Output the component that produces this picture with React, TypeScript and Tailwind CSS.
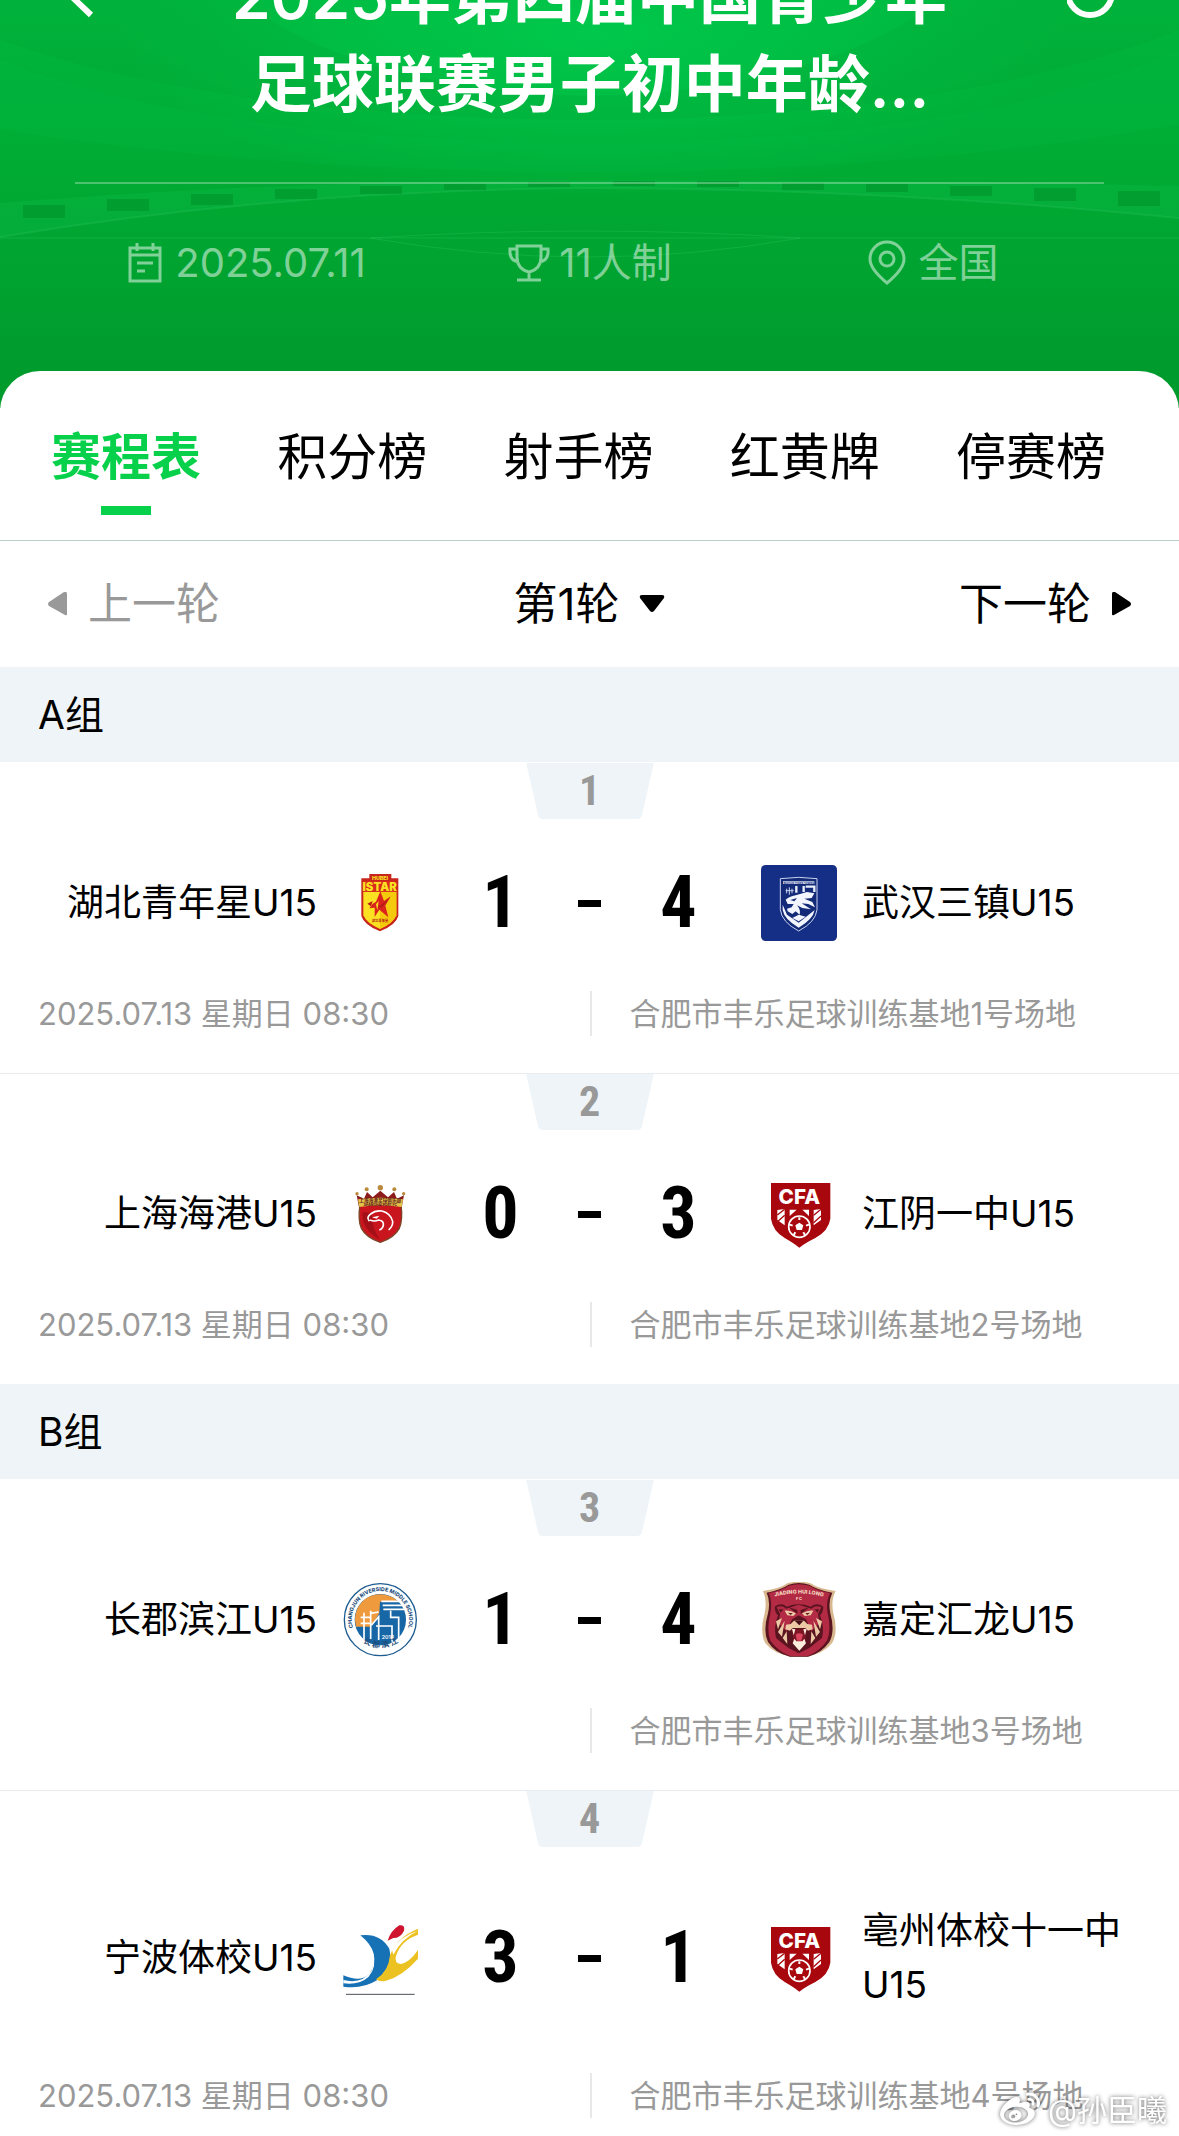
import type { ReactNode } from "react";
import { FaWeibo } from "react-icons/fa";

const tabs = ["赛程表", "积分榜", "射手榜", "红黄牌", "停赛榜"];

const IstarLogo = () => (
  <svg viewBox="6 42 228 228" className="size-full">
    <path d="M88 69H154V82H175V195Q168 222 120 241Q72 222 64 195V82H88Z" fill="#c8261c" />
    <path d="M70 122H169V193Q160 216 120 234Q79 216 70 193Z" fill="#fbe122" />
    <path d="M120 122H169V193Q160 216 120 234Z" fill="#f5c90c" />
    <path d="M70 90H169V122H70Z" fill="#d92a1c" />
    <text x="120" y="86" textAnchor="middle" fontSize="16" fontWeight="800" fill="#fbe122">
      HUBEI
    </text>
    <text x="119" y="120" textAnchor="middle" fontSize="34" fontWeight="900" fill="#fbe122">
      ISTAR
    </text>
    <path d="M121 121L132 150L152 136L136 164L145 199L118 176L104 198L104 170L88 172L98 158L108 152Z" fill="#d9231c" />
    <path d="M82 158L98 150L93 166ZM112 171L150 140L126 168Z" fill="#b51a17" />
    <path d="M108 160L116 150L112 178Z" fill="#fbe122" />
    <text x="120" y="213" textAnchor="middle" fontSize="10" fontWeight="700" fill="#b51a17">
      湖北青年星
    </text>
  </svg>
);

const WuhanLogo = () => (
  <svg viewBox="62 41 228 228" className="size-full">
    <rect x="62" y="41" width="228" height="228" rx="14" fill="#152f86" />
    <path d="M120 82Q175 74 230 82V175Q226 212 175 239Q124 212 120 175Z" fill="#132a78" stroke="#c9d3ee" strokeWidth="3" />
    <path d="M128 90H222V98H128Z" fill="#e9eefb" />
    <text x="175" y="98" textAnchor="middle" fontSize="8" fontWeight="700" fill="#132a78">
      WUHAN THREE TOWNS
    </text>
    <path d="M168 104V124M190 104V122M196 106H222V122" stroke="#e9eefb" strokeWidth="7" fill="none" />
    <path d="M139 112V126M147 108V130M155 112V126M136 118H160" stroke="#c9d3ee" strokeWidth="3" />
    <path
      d="M136 145Q146 136 166 132L200 122L222 126L214 140L192 142L216 152L224 168L204 158L184 156L212 174L186 170L170 162Q182 176 178 190L166 180L156 188L142 180L140 172L154 168L160 158L142 158Z"
      fill="#f2f5fd"
    />
    <path d="M150 146L170 140L162 150Z" fill="#132a78" />
    <path d="M127 160V176Q132 204 175 229Q218 204 223 176L175 214L140 190Z" fill="#f2f5fd" />
    <path d="M156 200L175 190L196 196L175 210Z" fill="#f2f5fd" />
  </svg>
);

const PortLogo = () => (
  <svg viewBox="36 18 228 228" className="size-full">
    <circle cx="81" cy="71" r="5" fill="#b9893c" />
    <circle cx="110" cy="58" r="6" fill="#b9893c" />
    <circle cx="151" cy="53" r="8" fill="#b9893c" />
    <circle cx="193" cy="58" r="6" fill="#b9893c" />
    <circle cx="221" cy="71" r="5" fill="#b9893c" />
    <path d="M80 76L102 86L111 66L128 82L151 62L174 82L192 66L201 86L222 76L214 118H88Z" fill="#8c1c1c" />
    <path d="M90 104H213Q219 150 208 175Q193 203 151 217Q109 203 94 175Q83 150 90 104Z" fill="#c9151e" stroke="#7a4526" strokeWidth="4" />
    <path d="M98 126Q92 176 151 210Q124 176 126 130Z" fill="#a31018" />
    <path d="M84 88Q151 78 219 88L215 111Q151 101 88 111Z" fill="#e3c34a" />
    <text x="151" y="97" textAnchor="middle" fontSize="14" fontWeight="700" fill="#5f1716">
      上海海港足球俱乐部
    </text>
    <text x="151" y="107" textAnchor="middle" fontSize="10" fontWeight="800" fill="#5f1716">
      SHANGHAI PORT FC
    </text>
    <path
      d="M118 154Q108 142 122 132Q136 120 156 123Q182 130 188 154Q189 168 176 180M120 150Q132 156 146 150Q162 152 160 166Q158 176 148 180"
      fill="none"
      stroke="#fff"
      strokeWidth="5"
    />
    <path d="M126 142L148 137L140 146Z" fill="#fff" />
  </svg>
);

const CfaLogo = () => (
  <svg viewBox="63 48 228 228" className="size-full">
    <path d="M93 69H271V176Q266 212 226 234Q194 250 178 263Q162 250 134 234Q98 212 93 176Z" fill="#a8070d" />
    <text x="178" y="131" textAnchor="middle" fontSize="62" fontWeight="800" fill="#fff">
      CFA
    </text>
    <path d="M112 150L134 147V196L112 180ZM149 149H170L149 168ZM187 149H207V168ZM221 150L243 147V180L221 196Z" fill="#fff" />
    <path d="M112 165L134 148M114 184L134 166M221 166L243 148M221 188L243 168" stroke="#a8070d" strokeWidth="4" />
    <circle cx="178" cy="200" r="38" fill="#a8070d" />
    <circle cx="178" cy="200" r="32" fill="none" stroke="#fff" strokeWidth="5" />
    <path d="M178 188L190 196L186 210H170L166 196Z" fill="#fff" />
    <path d="M178 172V180M149 194L158 197M207 194L198 197M161 225L166 217M195 225L190 217" stroke="#fff" strokeWidth="6" />
  </svg>
);

const ChangjunLogo = () => (
  <svg viewBox="36 66 228 228" className="size-full">
    <defs>
      <path id="ring-top" d="M77 222A86 86 0 1 1 226 222" />
      <path id="ring-bottom" d="M64 208A98 98 0 0 0 240 208" />
    </defs>
    <circle cx="151" cy="179" r="108" fill="#fff" stroke="#1d5c91" strokeWidth="4" />
    <circle cx="151" cy="179" r="77" fill="#1766a5" />
    <path d="M75 179A76 76 0 0 1 205 125L150 125L148 160L122 200H78Z" fill="#f09a3e" />
    <path d="M92 172H120M92 190H120M102 158V244M122 152V238M122 160L146 156M124 196L146 170V240M138 198H186V248M154 124H214M158 136H218M160 148H222M182 152V172H206V236" fill="none" stroke="#fff" strokeWidth="5" />
    <text x="174" y="236" textAnchor="middle" fontSize="16" fontWeight="600" fill="#fff">
      2016
    </text>
    <text fontSize="16" fontWeight="800" fill="#1d4f80">
      <textPath href="#ring-top" startOffset="50%" textAnchor="middle">
        CHANGJUN RIVERSIDE MIDDLE SCHOOL
      </textPath>
    </text>
    <text fontSize="24" fontWeight="700" fill="#1d4f80">
      <textPath href="#ring-bottom" startOffset="50%" textAnchor="middle">
        长 郡 滨 江
      </textPath>
    </text>
  </svg>
);

const JiadingLogo = () => (
  <svg viewBox="63 66 228 228" className="size-full">
    <defs>
      <path id="jiading-arc" d="M100 111Q176 90 254 111" />
    </defs>
    <path d="M69 93Q120 86 142 70Q176 60 212 70Q234 86 287 93Q272 120 280 160Q296 216 276 250Q250 280 204 290H150Q100 280 76 250Q58 216 74 160Q82 120 69 93Z" fill="#d9b890" />
    <path d="M80 98Q122 90 146 74Q176 64 208 74Q232 90 277 98Q264 124 271 160Q286 214 268 246Q244 280 204 290H150Q106 280 84 246Q68 214 84 160Q92 124 80 98Z" fill="#5a1420" />
    <path d="M86 99Q124 92 146 77Q176 68 208 77Q232 92 270 99Q257 126 263 160Q275 210 261 242Q240 272 204 288H150Q112 272 91 242Q79 210 91 160Q98 126 86 99Z" fill="#b32a45" />
    <text fontSize="16" fontWeight="800" fill="#f4d9c0">
      <textPath href="#jiading-arc" startOffset="50%" textAnchor="middle">
        JIADING HUI LONG
      </textPath>
    </text>
    <text x="177" y="119" textAnchor="middle" fontSize="12" fontWeight="800" fill="#f4d9c0">
      F C
    </text>
    <path d="M104 140Q124 126 140 140Q176 126 212 140Q232 126 250 140Q250 156 240 166Q254 200 246 234Q226 250 208 264L176 280L146 264Q126 250 108 234Q100 200 114 166Q104 156 104 140Z" fill="#5a1420" />
    <path d="M110 142Q126 134 138 146L176 134L214 146Q228 134 244 142L234 162L238 190L214 214L198 178L176 166L156 178L140 214L116 190L120 162Z" fill="#b32a45" />
    <path d="M146 142L172 150V162ZM208 142L182 150V162ZM116 148L130 148L122 158ZM238 148L224 148L232 158Z" fill="#5a1420" />
    <path d="M134 152Q150 150 168 160L160 168L142 166ZM220 152Q204 150 186 160L194 168L212 166Z" fill="#ecc9a4" />
    <path d="M144 158L158 160L152 165ZM210 158L196 160L202 165Z" fill="#5a1420" />
    <path d="M108 184L126 174L114 208ZM246 184L228 174L240 208ZM114 216L134 182L126 230ZM240 216L220 182L228 230ZM128 234L140 214L142 252ZM226 234L214 214L212 252Z" fill="#ecc9a4" />
    <path d="M162 182H192L202 192L216 194L218 208L204 212L196 204H158L150 212L136 208L138 194L152 192Z" fill="#ecc9a4" />
    <path d="M164 182H190L178 196Z" fill="#431019" />
    <path d="M156 208H200L196 244L178 250L160 244Z" fill="#7d1525" />
    <path d="M156 206L166 208L161 226ZM200 206L190 208L195 226ZM158 250L163 236L169 244H187L193 236L198 250L178 272Z" fill="#fbeedd" />
    <path d="M167 224Q178 216 189 224L184 242H171Z" fill="#d8455c" />
  </svg>
);

const NingboLogo = () => (
  <svg viewBox="36 60 228 228" className="size-full">
    <path d="M91 106Q150 98 178 146Q190 196 142 240Q98 268 40 260V226Q92 248 118 222Q158 160 91 106Z" fill="#1671b5" />
    <path d="M40 240Q96 254 124 212Q132 190 128 166Q142 200 116 230Q88 256 40 250Z" fill="#fff" />
    <path d="M138 238Q176 214 180 166Q200 112 264 86V104Q212 122 198 168Q192 190 212 192Q238 188 264 150V176Q216 230 166 243Q148 246 138 238Z" fill="#ecc223" />
    <path d="M186 150Q208 110 264 92Q214 116 190 164Z" fill="#fff" />
    <path d="M173 122Q182 92 208 76Q226 74 222 92Q212 114 190 114Z" fill="#cf1430" />
    <path d="M48 283H254" stroke="#4b5056" strokeWidth="3" />
  </svg>
);

type Team = { name: string; logo: ReactNode };
type Match = {
  no: number;
  home: Team;
  away: Team;
  score: [number, number];
  date: string;
  venue: string;
};

const groups: { name: string; matches: Match[] }[] = [
  {
    name: "A组",
    matches: [
      {
        no: 1,
        home: { name: "湖北青年星U15", logo: <IstarLogo /> },
        away: { name: "武汉三镇U15", logo: <WuhanLogo /> },
        score: [1, 4],
        date: "2025.07.13 星期日 08:30",
        venue: "合肥市丰乐足球训练基地1号场地",
      },
      {
        no: 2,
        home: { name: "上海海港U15", logo: <PortLogo /> },
        away: { name: "江阴一中U15", logo: <CfaLogo /> },
        score: [0, 3],
        date: "2025.07.13 星期日 08:30",
        venue: "合肥市丰乐足球训练基地2号场地",
      },
    ],
  },
  {
    name: "B组",
    matches: [
      {
        no: 3,
        home: { name: "长郡滨江U15", logo: <ChangjunLogo /> },
        away: { name: "嘉定汇龙U15", logo: <JiadingLogo /> },
        score: [1, 4],
        date: "",
        venue: "合肥市丰乐足球训练基地3号场地",
      },
      {
        no: 4,
        home: { name: "宁波体校U15", logo: <NingboLogo /> },
        away: { name: "亳州体校十一中U15", logo: <CfaLogo /> },
        score: [3, 1],
        date: "2025.07.13 星期日 08:30",
        venue: "合肥市丰乐足球训练基地4号场地",
      },
    ],
  },
];

// dark boards along the edge of the pitch: x, y, height
const boards = [
  [23, 205, 13], [107, 199, 12], [191, 194, 11], [275, 189, 10], [360, 186, 8],
  [444, 184, 6], [528, 182, 5], [613, 181, 5], [697, 181, 6], [782, 183, 7],
  [866, 184, 8], [950, 186, 10], [1034, 188, 13], [1118, 191, 15],
];

const Stadium = () => (
  <svg
    viewBox="0 0 1179 408"
    preserveAspectRatio="none"
    className="absolute inset-0 size-full"
    aria-hidden="true"
  >
    <defs>
      <linearGradient id="field" x1="0" y1="0" x2="0" y2="1">
        <stop offset="0" stopColor="#00b63d" />
        <stop offset="0.45" stopColor="#00aa33" />
        <stop offset="0.9" stopColor="#009b2d" />
      </linearGradient>
      <radialGradient id="glow" cx="0.5" cy="0.08" r="0.4">
        <stop offset="0" stopColor="#00c84c" />
        <stop offset="1" stopColor="#00c84c" stopOpacity="0" />
      </radialGradient>
    </defs>
    <rect width="1179" height="408" fill="url(#field)" />
    <rect width="1179" height="408" fill="url(#glow)" />
    <path d="M0 60Q200 140 589 143Q980 140 1179 50V125Q900 172 589 172Q280 172 0 130Z" fill="#00c048" opacity="0.16" />
    <path d="M0 0H240Q360 90 589 96Q820 90 940 0H1179V30Q960 118 589 120Q220 118 0 40Z" fill="#009a30" opacity="0.16" />
    <path d="M0 203Q280 180 589 180Q900 180 1179 186V218Q880 188 589 188Q280 190 0 237Z" fill="#0cbb48" opacity="0.35" />
    <path d="M0 237Q280 190 589 188Q880 188 1179 218" fill="none" stroke="#2cc45c" strokeWidth="2" opacity="0.3" />
    <path d="M0 238H1179M370 238Q589 276 800 238Q589 224 370 238" fill="none" stroke="#2cc45c" strokeWidth="1" opacity="0.35" />
    {boards.map(([x, y, h]) => (
      <rect key={x} x={x} y={y} width="42" height={h} fill="#009329" opacity="0.6" />
    ))}
  </svg>
);

const Header = () => (
  <header className="relative overflow-hidden bg-[#009b2d] pb-[115px] text-white">
    <Stadium />
    <div className="relative -mt-[47px] flex items-start justify-between px-14">
      <button type="button" aria-label="返回" className="mt-4">
        <svg viewBox="0 0 56 56" className="size-14" fill="none" stroke="#fff" strokeWidth="6">
          <path d="M34 4L12 24L35 46" />
        </svg>
      </button>
      <h1 className="text-center text-[62px] leading-[88px] font-semibold">
        2025年第四届中国青少年
        <br />
        足球联赛男子初中年龄...
      </h1>
      <button type="button" aria-label="更多" className="mt-4">
        <svg viewBox="0 0 56 56" className="size-14" fill="none" stroke="#fff" strokeWidth="6">
          <circle cx="23" cy="24" r="22" />
        </svg>
      </button>
    </div>
    <div className="relative mx-[75px] mt-[53px] border-t-2 border-white/30"></div>
    <ul className="relative mx-[75px] mt-[49px] grid grid-cols-3 text-[40px] leading-[60px] text-white/50">
      <li className="flex items-center justify-center gap-3">
        <svg viewBox="0 0 36 42" className="h-[42px] w-9" fill="none" stroke="currentColor" strokeWidth="3">
          <path d="M3 6H33V39H3ZM3 13H33M10 1V9M26 1V9M10 21H26M10 29H18" />
        </svg>
        2025.07.11
      </li>
      <li className="flex items-center justify-center gap-2">
        <svg viewBox="0 0 44 40" className="h-10 w-11" fill="none" stroke="currentColor" strokeWidth="3">
          <path d="M10 3H34V14Q34 26 22 29Q10 26 10 14ZM10 6H3Q2 18 12 19M34 6H41Q42 18 32 19M22 29V36M10 37H34" />
        </svg>
        11人制
      </li>
      <li className="flex items-center justify-center gap-3">
        <svg viewBox="0 0 40 46" className="h-[46px] w-10" fill="none" stroke="currentColor" strokeWidth="3">
          <path d="M20 43Q3 29 3 19A17 17 0 0 1 37 19Q37 29 20 43Z" />
          <circle cx="20" cy="19" r="7" />
        </svg>
        全国
      </li>
    </ul>
  </header>
);

const TeamLogo = ({ children }: { children: ReactNode }) => (
  <div className="size-[76px] shrink-0">{children}</div>
);

const MatchCard = ({ match }: { match: Match }) => (
  <li className="border-t border-[#e8ecee] pb-[37px] first:border-transparent">
    <div className="relative mx-auto flex h-14 w-32 items-center justify-center">
      <svg viewBox="0 0 128 56" className="absolute inset-0 size-full" aria-hidden="true">
        <path d="M0 -1H128L116 52Q115 56 111 56H17Q13 56 12 52Z" fill="#eef4f7" />
      </svg>
      <span className="relative font-['Roboto_Condensed','Roboto',sans-serif] text-[42px] leading-[56px] font-bold text-[#999]">
        {match.no}
      </span>
    </div>
    <div className="mt-[46px] flex items-center">
      <p className="flex-1 py-[11px] pr-[25px] pl-9 text-right text-[37px] leading-[54px]">
        {match.home.name}
      </p>
      <TeamLogo>{match.home.logo}</TeamLogo>
      <div className="flex w-[343px] shrink-0 items-center justify-center font-['Roboto_Condensed','Roboto',sans-serif] text-[72px] leading-[76px] font-bold">
        <span className="w-[89px] text-center">{match.score[0]}</span>
        <span className="flex w-[89px] justify-center">
          <span className="h-[7px] w-[23px] bg-black"></span>
        </span>
        <span className="w-[89px] text-center">{match.score[1]}</span>
      </div>
      <TeamLogo>{match.away.logo}</TeamLogo>
      <p className="flex-1 py-[11px] pr-9 pl-[25px] text-[37px] leading-[54px]">
        {match.away.name}
      </p>
    </div>
    <div className="mt-[50px] grid grid-cols-2 text-[31px] leading-[45px] text-[#999]">
      <p className="pl-[38px]">{match.date}</p>
      <p className="border-l-2 border-[#e6e8ea] pl-[38px]">{match.venue}</p>
    </div>
  </li>
);

export default function App() {
  return (
    <div className="relative min-h-screen overflow-hidden bg-white font-['Inter','Noto_Sans_CJK_SC',sans-serif] text-black">
      <Header />
      <main className="relative -mt-[37px] rounded-t-[40px] bg-white">
        <nav className="flex justify-between border-b border-[#b9cdc9] pt-[52px] pr-[73px] pl-[51px] text-[50px] leading-[68px]">
          {tabs.map((tab, i) => (
            <a
              key={tab}
              href="#"
              className={
                i === 0
                  ? "flex flex-col items-center font-bold text-[#07d14a]"
                  : "flex flex-col items-center"
              }
            >
              {tab}
              <span
                className={
                  i === 0
                    ? "mt-[15px] mb-[25px] h-[9px] w-[50px] bg-[#07d14a]"
                    : "hidden"
                }
              ></span>
            </a>
          ))}
        </nav>
        <div className="flex items-center justify-between px-12 py-8 text-[44px] leading-[62px]">
          <button type="button" className="flex items-center gap-5 text-[#999]">
            <svg viewBox="0 0 20 26" className="h-[26px] w-5" fill="currentColor">
              <path d="M18 1Q19 1 19 3V23Q19 25 17 24L1 15Q-1 13 1 11L16 1Z" />
            </svg>
            上一轮
          </button>
          <button type="button" className="flex items-center gap-5">
            第1轮
            <svg viewBox="0 0 26 18" className="h-[18px] w-[26px]" fill="currentColor">
              <path d="M3 0H23Q26 0 25 3L15 16Q13 18 11 16L1 3Q0 0 3 0Z" />
            </svg>
          </button>
          <button type="button" className="flex items-center gap-5">
            下一轮
            <svg viewBox="0 0 20 26" className="h-[26px] w-5" fill="currentColor">
              <path d="M2 1Q1 1 1 3V23Q1 25 3 24L19 15Q21 13 19 11L4 1Z" />
            </svg>
          </button>
        </div>
        {groups.map((group) => (
          <section key={group.name}>
            <h2 className="bg-[#eef4f7] px-[38px] py-[17px] text-[39px] leading-[61px]">
              {group.name}
            </h2>
            <ul>
              {group.matches.map((match) => (
                <MatchCard key={match.no} match={match} />
              ))}
            </ul>
          </section>
        ))}
      </main>
      <div className="fixed right-3 bottom-1 flex items-center gap-2 text-[30px] leading-[44px] text-white drop-shadow-[0_0_2px_rgba(0,0,0,0.6)]">
        <FaWeibo className="size-10" />
        @孙臣曦
      </div>
    </div>
  );
}
